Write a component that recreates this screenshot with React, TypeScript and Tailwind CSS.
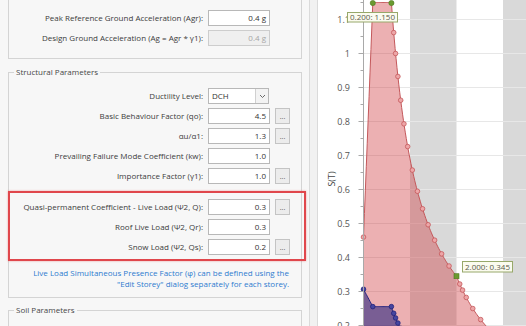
import React from "react";

const X = (t: number) => 363.5 + t * 46.5;
const Y = (v: number) => 53.5 + (1 - v) * 340;
const ag = 0.4, S = 1.15, TB = 0.2, TC = 0.6, TD = 2.0, q = 4.5;
const se = (t: number) =>
  t < TB ? ag * S * (1 + (t / TB) * 1.5) : t <= TC ? ag * S * 2.5 : t <= TD ? (ag * S * 2.5 * TC) / t : (ag * S * 2.5 * TC * TD) / (t * t);
const sd = (t: number) =>
  t < TB
    ? ag * S * (2 / 3 + (t / TB) * (2.5 / q - 2 / 3))
    : t <= TC
    ? (ag * S * 2.5) / q
    : Math.max((ag * S * 2.5 * TC) / q / t, 0.2 * ag);

function samples() {
  const ts: number[] = [0, TB, TC, TD];
  for (let t = 0; t <= 4; t += 0.02) ts.push(Math.round(t * 1000) / 1000);
  return Array.from(new Set(ts)).sort((a, b) => a - b);
}
const TS = samples();
const line = (f: (t: number) => number) => TS.map((t) => `${X(t).toFixed(2)},${Y(f(t)).toFixed(2)}`).join(" ");
const area = (f: (t: number) => number) => `${X(0)},420 ${line(f)} ${X(4)},420`;

const pinkT = [0, 0.65, 0.69, 0.74, 0.8, 0.87, 0.95, 1.05, 1.16, 1.27, 1.39, 1.53, 1.68, 1.84, 2.07, 2.13, 2.21, 2.35, 2.52, 2.7, 2.9];
const blueT = [0, 0.2, 0.6, 0.65, 0.69, 0.74, 0.8];
const labels = [1.1, 1.0, 0.9, 0.8, 0.7, 0.6, 0.5, 0.4, 0.3, 0.2];
const minor: number[] = [];
for (let v = 0.15; v <= 1.2; v += 0.05) minor.push(Math.round(v * 100) / 100);

function Chart() {
  return (
    <svg width="208" height="326" viewBox="318 0 208 326" className="block">
      <rect x="318" y="0" width="208" height="326" fill="#ffffff" />
      <rect x={X(1)} y="0" width={X(2) - X(1)} height="326" fill="#d9d9d9" />
      <rect x={X(3)} y="0" width="60" height="326" fill="#d9d9d9" />
      {labels.map((v) => (
        <line key={"g" + v} x1="363.5" x2="526" y1={Y(v)} y2={Y(v)} stroke="#e7e7e7" strokeWidth="1" />
      ))}
      <polygon points={area(se)} fill="rgba(208,57,63,0.4)" />
      <polyline points={line(se)} fill="none" stroke="#c4585b" strokeWidth="1" />
      <polygon points={area(sd)} fill="rgba(28,28,124,0.55)" />
      <polyline points={line(sd)} fill="none" stroke="#262680" strokeWidth="1" />
      {pinkT.map((t) => (
        <circle key={"p" + t} cx={X(t)} cy={Y(se(t))} r="2.3" fill="#eda6a8" stroke="#c5585b" strokeWidth="0.8" />
      ))}
      {blueT.map((t) => (
        <circle key={"b" + t} cx={X(t)} cy={Y(sd(t))} r="2.3" fill="#4646a0" stroke="#22227a" strokeWidth="0.8" />
      ))}
      <circle cx={X(0.2)} cy={Y(se(0.2)) + 0.5} r="2.6" fill="#6a9a30" stroke="#4d7a1d" strokeWidth="0.6" />
      <circle cx={X(0.6)} cy={Y(se(0.6)) + 0.5} r="2.6" fill="#6a9a30" stroke="#4d7a1d" strokeWidth="0.6" />
      <rect x={X(2) - 2.5} y={Y(se(2)) - 2.5} width="5" height="5" fill="#6a9a30" stroke="#4d7a1d" strokeWidth="0.6" />
      <line x1="363.5" x2="363.5" y1="0" y2="326" stroke="#a9a9a9" strokeWidth="1" />
      {minor.map((v) => (
        <line key={"t" + v} x1={Math.round(v * 100) % 10 === 0 ? 358.5 : 360.5} x2="363.5" y1={Y(v)} y2={Y(v)} stroke="#a9a9a9" strokeWidth="1" />
      ))}
      {labels.map((v) => (
        <text key={"l" + v} x="350" y={Y(v) + 3} textAnchor="end" fontSize="9" fill="#555555" fontFamily="'Open Sans', sans-serif">
          {v === 1 ? "1" : v.toFixed(1)}
        </text>
      ))}
      <text x="0" y="0" transform="translate(334.5 179) rotate(-90)" textAnchor="middle" fontSize="9" fill="#444444" fontFamily="'Open Sans', sans-serif">
        S(T)
      </text>
      <rect x="347.5" y="12.5" width="50" height="9.5" fill="#fbfbef" stroke="#97a86a" strokeWidth="1" />
      <text x="372.5" y="20" textAnchor="middle" fontSize="8" fill="#5a5a4a" fontFamily="'Open Sans', sans-serif">
        0.200: 1.150
      </text>
      <rect x="462.5" y="261.5" width="50" height="10.5" fill="#fbfbef" stroke="#97a86a" strokeWidth="1" />
      <text x="487.5" y="269.5" textAnchor="middle" fontSize="8" fill="#5a5a4a" fontFamily="'Open Sans', sans-serif">
        2.000: 0.345
      </text>
    </svg>
  );
}

function Input({ value, disabled }: { value: string; disabled?: boolean }) {
  return disabled ? (
    <div className="flex h-[16px] w-[62px] shrink-0 items-center justify-end border border-[#cdcdcd] bg-[#efefef] pr-[3px] text-[8px] text-[#a6a6a6]">
      {value}
    </div>
  ) : (
    <div className="flex h-[16px] w-[62px] shrink-0 items-center justify-end border border-[#b8b8b8] bg-white pr-[3px] text-[8px] text-[#333333]">
      {value}
    </div>
  );
}

function Dots() {
  return (
    <div className="ml-[5px] flex h-[16px] w-[15px] shrink-0 items-end justify-center border border-[#c4c4c4] bg-[#ececec] pb-[3px] text-[7px] leading-none text-[#555555]">
      ...
    </div>
  );
}

function Row({ label, value, btn, disabled, wide }: { label: string; value: string; btn?: boolean; disabled?: boolean; wide?: boolean }) {
  return (
    <div className="flex h-[20px] items-center">
      <span className={wide ? "w-[199px] shrink-0 pr-[5px] text-right" : "w-[198px] shrink-0 pr-[5px] text-right"}>{label}</span>
      <Input value={value} disabled={disabled} />
      {btn && <Dots />}
    </div>
  );
}

export default function App() {
  return (
    <div className="flex h-[326px] w-[526px] overflow-hidden bg-white font-['Open_Sans',sans-serif] text-[8px] leading-[12px] text-[#3c3c3c]">
      <div className="flex h-full w-[309px] shrink-0 flex-col bg-[#f7f7f7] pl-[8px]">
        <div className="-mt-[10px] w-[294px] shrink-0 border border-[#d4d4d4] pt-[17px] pb-[10px]">
          <Row wide label="Peak Reference Ground Acceleration (Agr):" value="0.4 g" />
          <Row wide label="Design Ground Acceleration (Ag = Agr * γ1):" value="0.4 g" disabled />
        </div>

        <fieldset className="mt-[7px] w-[294px] shrink-0 border border-[#d4d4d4]">
          <legend className="ml-[5px] px-[2px] text-[8px] leading-[12px] text-[#474747]">Structural Parameters</legend>
          <div className="flex flex-col pt-[8px] pb-[8px]">
            <div className="flex h-[20px] items-center">
              <span className="w-[199px] shrink-0 pr-[5px] text-right">Ductility Level:</span>
              <div className="flex h-[16px] w-[61px] shrink-0 items-stretch border border-[#b8b8b8] bg-white">
                <span className="flex flex-1 items-center pl-[3px] text-[8px] text-[#333333]">DCH</span>
                <span className="flex w-[13px] items-center justify-center border-l border-[#d0d0d0] bg-[#f3f3f3]">
                  <svg width="7" height="5" viewBox="0 0 7 5">
                    <path d="M1 1 L3.5 3.5 L6 1" fill="none" stroke="#6a6a6a" strokeWidth="1" />
                  </svg>
                </span>
              </div>
            </div>
            <Row wide label="Basic Behaviour Factor (qo):" value="4.5" btn />
            <Row wide label="αu/α1:" value="1.3" btn />
            <Row wide label="Prevailing Failure Mode Coefficient (kw):" value="1.0" />
            <Row wide label="Importance Factor (γ1):" value="1.0" btn />

            <div className="-ml-[1px] -mr-[5px] mt-[5px] border-2 border-[#e0474c] pt-[4px] pb-[2px] shadow-[0_0_2px_rgba(220,60,60,0.45)]">
              <Row label="Quasi-permanent Coefficient - Live Load (Ψ2, Q):" value="0.3" btn />
              <Row label="Roof Live Load (Ψ2, Qr):" value="0.3" />
              <Row label="Snow Load (Ψ2, Qs):" value="0.2" btn />
            </div>

            <div className="mt-[7px] pr-[12px] text-right text-[8px] leading-[10.5px] text-[#2e7bcf]">
              <div>Live Load Simultaneous Presence Factor (φ) can be defined using the</div>
              <div>"Edit Storey" dialog separately for each storey.</div>
            </div>
          </div>
        </fieldset>

        <fieldset className="mt-[6px] h-[60px] w-[294px] shrink-0 border border-[#d4d4d4]">
          <legend className="ml-[5px] px-[2px] text-[8px] leading-[12px] text-[#474747]">Soil Parameters</legend>
        </fieldset>
      </div>

      <div className="h-full w-[9px] shrink-0 border-x border-[#dadada] bg-[#f1f1f1]" />

      <div className="h-full flex-1 bg-white">
        <Chart />
      </div>
    </div>
  );
}
